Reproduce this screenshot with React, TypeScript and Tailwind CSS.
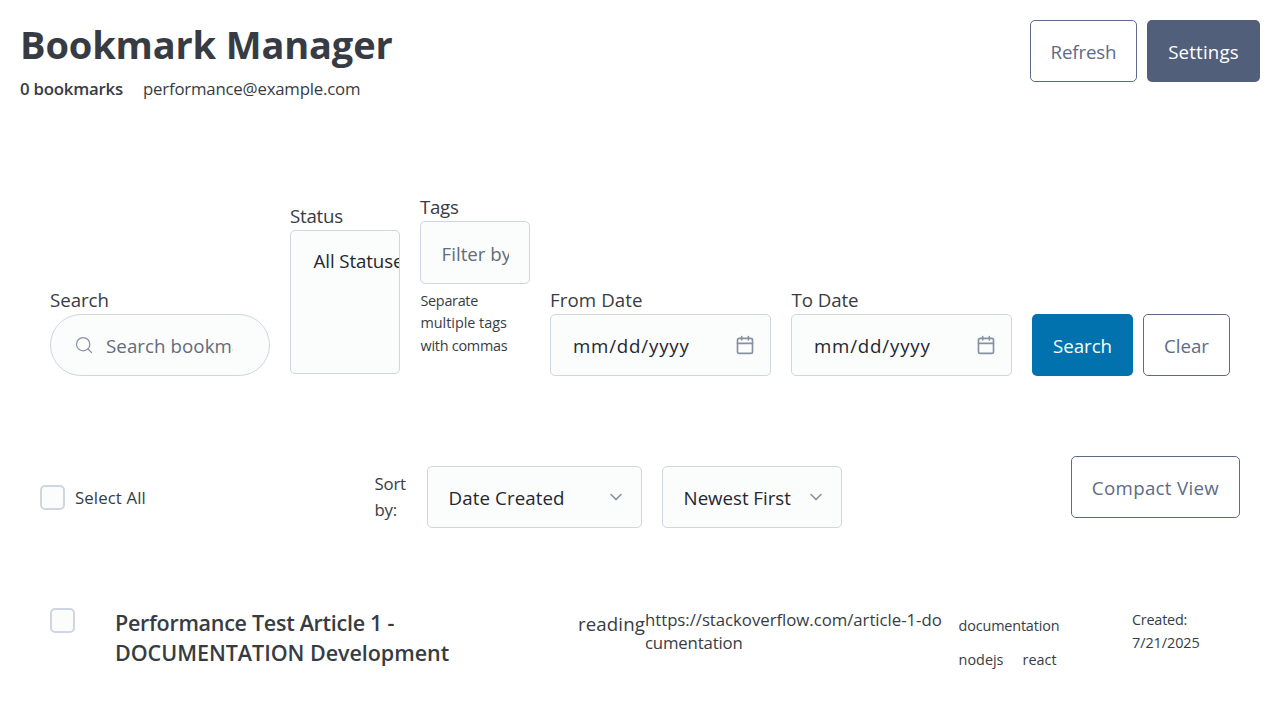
import type { ReactNode } from "react";

const fieldBox = "rounded-[5px] border border-[#cfd5e2] bg-[#fbfcfc] text-[18.7px] text-[#24272f]";
const outlineButton =
  "flex h-[62px] items-center justify-center rounded-[5px] border border-[#5d6b89] bg-white text-[18.7px] text-[#5d6b89]";

function Field({ label, spacing, className, children }: { label: string; spacing: string; className: string; children: ReactNode }) {
  return (
    <label className={`block shrink-0 ${className}`}>
      <span className={`block text-[18.7px] leading-[29px] whitespace-nowrap ${spacing}`}>{label}</span>
      {children}
    </label>
  );
}

function CalendarIcon() {
  return (
    <svg width="20" height="20" viewBox="0 0 24 24" fill="none" stroke="#8891a4" strokeWidth="2" strokeLinecap="round" strokeLinejoin="round">
      <rect x="3" y="4" width="18" height="18" rx="2" />
      <path d="M16 2v4M8 2v4M3 10h18" />
    </svg>
  );
}

function DateBox() {
  return (
    <div className={`flex h-[62px] items-center justify-between pr-[15px] pl-[22px] ${fieldBox}`}>
      <span className="mt-[3px] tracking-[0.8px]">mm/dd/yyyy</span>
      <CalendarIcon />
    </div>
  );
}

function SelectBox({ text, className }: { text: string; className: string }) {
  return (
    <div className={`flex h-[62px] shrink-0 items-center justify-between pr-[15px] pl-[20.6px] whitespace-nowrap ${fieldBox} ${className}`}>
      <span className="mt-[3px]">{text}</span>
      <svg width="20" height="20" viewBox="0 0 24 24" fill="none" stroke="#8891a4" strokeWidth="2" strokeLinecap="round" strokeLinejoin="round">
        <path d="M6 9l6 6 6-6" />
      </svg>
    </div>
  );
}

function Checkbox() {
  return <span className="block size-[25px] shrink-0 rounded-[5px] border-2 border-[#cfd5e2] bg-[#fbfcfc]" />;
}

export default function App() {
  return (
    <div className="h-[720px] w-[1280px] overflow-hidden bg-white font-['Open_Sans',sans-serif] text-[#373c44]">
      <header className="flex h-[102px] items-start justify-between px-5 pt-5">
        <div>
          <h1 className="text-[38px] leading-[48px] font-bold tracking-[-0.15px]">Bookmark Manager</h1>
          <div className="mt-[7px] flex text-[16.8px] leading-[27px]">
            <span className="w-[123px] font-semibold tracking-[-0.22px]">0 bookmarks</span>
            <span className="tracking-[-0.2px]">performance@example.com</span>
          </div>
        </div>
        <div className="flex gap-2.5">
          <button className={`w-[107px] ${outlineButton}`}>
            <span className="mt-[3px] tracking-[-0.14px]">Refresh</span>
          </button>
          <button className="flex h-[62px] w-[113px] items-center justify-center rounded-[5px] bg-[#525f7a] text-[18.7px] text-white">
            <span className="mt-[3px] tracking-[0.16px]">Settings</span>
          </button>
        </div>
      </header>

      <form className="flex h-[274px] items-end gap-5 px-[50px]">
        <Field label="Search" spacing="tracking-[-0.04px]" className="w-[220px]">
          <div className="flex h-[62px] items-center rounded-full border border-[#cfd5e2] bg-[#fbfcfc] pr-[36.5px] pl-[23px]">
            <svg className="shrink-0" width="20" height="20" viewBox="0 0 24 24" fill="none" stroke="#8891a4" strokeWidth="1.5" strokeLinecap="round" strokeLinejoin="round">
              <circle cx="11" cy="11" r="8" />
              <path d="M21 21l-4.35-4.35" />
            </svg>
            <span className="mt-[3px] ml-[12px] min-w-0 overflow-hidden text-[18.7px] tracking-[0.07px] whitespace-nowrap text-[#646b79]">
              Search bookmarks...
            </span>
          </div>
        </Field>

        <Field label="Status" spacing="tracking-[-0.25px]" className="mb-[2px] w-[110px]">
          <div className={`h-[144px] overflow-hidden pt-[16px] pl-[22.6px] leading-[28px] tracking-[-0.1px] whitespace-nowrap ${fieldBox}`}>
            All Statuses
          </div>
        </Field>

        <Field label="Tags" spacing="tracking-[-0.3px]" className="mb-[19.5px] w-[110px]">
          <div className={`flex h-[63px] items-center px-[20px] ${fieldBox}`}>
            <span className="mt-[3px] overflow-hidden pl-[0.6px] whitespace-nowrap text-[#646b79]">Filter by tags...</span>
          </div>
          <div className="mt-[5.5px] -mb-[0.5px] pl-[0.5px] text-[14.4px] leading-[22.5px] whitespace-nowrap">
            <div className="tracking-[-0.3px]">Separate</div>
            <div className="tracking-[-0.02px]">multiple tags</div>
            <div className="tracking-[-0.24px]">with commas</div>
          </div>
        </Field>

        <Field label="From Date" spacing="tracking-[0.09px]" className="w-[221px]">
          <DateBox />
        </Field>
        <Field label="To Date" spacing="pl-[0.6px] tracking-[-0.1px]" className="w-[221px]">
          <DateBox />
        </Field>

        <div className="flex gap-2.5">
          <button type="button" className="flex h-[62px] w-[101px] items-center justify-center rounded-[5px] bg-[#0172ad] text-[18.7px] text-white">
            <span className="mt-[3px]">Search</span>
          </button>
          <button type="button" className={`w-[87px] ${outlineButton}`}>
            <span className="mt-[3px]">Clear</span>
          </button>
        </div>
      </form>

      <section className="flex h-[152px] items-start px-10 pt-20">
        <div className="mt-[29px] flex w-[334px] items-center gap-2.5 text-[16.8px] leading-[25px]">
          <Checkbox />
          <span className="tracking-[0.11px]">Select All</span>
        </div>
        <div className="mt-[15px] w-[53px] pl-[0.5px] text-[16.8px] leading-[26px] tracking-[-0.2px]">
          Sort
          <br />
          by:
        </div>
        <div className="mt-2.5 flex gap-5">
          <SelectBox text="Date Created" className="w-[215px] tracking-[0.1px]" />
          <SelectBox text="Newest First" className="w-[180px] tracking-[-0.03px]" />
        </div>
        <button className={`ml-auto w-[169px] tracking-[0.32px] ${outlineButton}`}>
          <span className="mt-[3px]">Compact View</span>
        </button>
      </section>

      <article className="flex items-start pt-20 pl-[50px] whitespace-nowrap">
        <div className="w-[65px]">
          <Checkbox />
        </div>
        <h2 className="w-[463px] text-[21.5px] leading-[30px] font-semibold">
          <span className="tracking-[-0.28px]">Performance Test Article 1 -</span>
          <br />
          <span className="tracking-[-0.03px]">DOCUMENTATION Development</span>
        </h2>
        <div className="w-[67px] text-[18.7px] leading-[31px] tracking-[0.1px]">reading</div>
        <div className="w-[313.6px] text-[16.8px] leading-[23px]">
          <div className="tracking-[-0.04px]">https://stackoverflow.com/article-1-do</div>
          <div className="tracking-[-0.17px]">cumentation</div>
        </div>
        <div className="w-[173.4px] pt-px text-[14.4px] leading-[34px]">
          <div className="tracking-[-0.16px]">documentation</div>
          <div className="flex">
            <span className="w-[64px]">nodejs</span>
            <span>react</span>
          </div>
        </div>
        <div className="text-[14.4px] leading-[23px]">
          <div className="tracking-[-0.22px]">Created:</div>
          <div className="tracking-[-0.05px]">7/21/2025</div>
        </div>
      </article>
    </div>
  );
}
